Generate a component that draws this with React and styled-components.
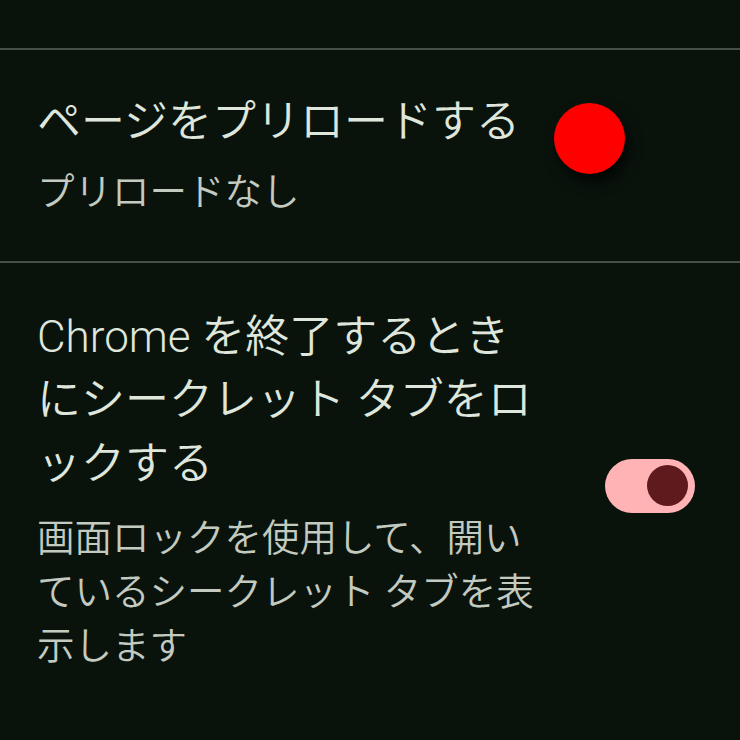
import React from "react";
import styled, { createGlobalStyle } from "styled-components";

const Global = createGlobalStyle`
  html, body {
    margin: 0;
    padding: 0;
    background: #09130c;
  }
  body {
    font-family: "Roboto", "Noto Sans CJK JP", sans-serif;
    -webkit-font-smoothing: antialiased;
  }
`;

const Screen = styled.div`
  width: 740px;
  height: 740px;
  overflow: hidden;
  background: #09130c;
  display: flex;
  flex-direction: column;
`;

const TopSpace = styled.div`
  height: 48px;
  flex: none;
`;

const Divider = styled.div`
  height: 2px;
  background: #465048;
  flex: none;
`;

const Row = styled.div`
  display: flex;
  align-items: ${(p) => (p.$top ? "flex-start" : "center")};
  padding: ${(p) => (p.$top ? "41px" : "43px")} 45px 42px 37px;
  flex: none;
`;

const TextCol = styled.div`
  width: 505px;
  flex: none;
  display: flex;
  flex-direction: column;
  gap: ${(p) => p.$gap}px;
`;

const Title = styled.div`
  font-size: 44px;
  line-height: 63.5px;
  color: #dfe6dc;
  font-weight: 350;
`;

const Subtitle = styled.div`
  font-size: 37.5px;
  line-height: 54px;
  color: #c3cac0;
  font-weight: 350;
`;

const Dot = styled.div`
  width: 71px;
  height: 71px;
  border-radius: 50%;
  background: #ff0000;
  margin-left: 12px;
  margin-top: 12px;
  flex: none;
  box-shadow: 4px 8px 14px rgba(0, 0, 0, 0.75);
`;

const Track = styled.div`
  margin-left: auto;
  margin-bottom: 7px;
  width: 90px;
  height: 54px;
  border-radius: 27px;
  background: #ffb3b4;
  display: flex;
  align-items: center;
  justify-content: flex-end;
  padding-right: 7px;
  box-sizing: border-box;
  flex: none;
`;

const Knob = styled.div`
  width: 41px;
  height: 41px;
  border-radius: 50%;
  background: #5e1a1d;
`;

export default function App() {
  return (
    <Screen>
      <Global />
      <TopSpace />
      <Divider />
      <Row $top>
        <TextCol $gap={10}>
          <Title>ページをプリロードする</Title>
          <Subtitle>プリロードなし</Subtitle>
        </TextCol>
        <Dot />
      </Row>
      <Divider />
      <Row>
        <TextCol $gap={15}>
          <Title>Chrome を終了するときにシークレット タブをロックする</Title>
          <Subtitle>画面ロックを使用して、開いているシークレット タブを表示します</Subtitle>
        </TextCol>
        <Track>
          <Knob />
        </Track>
      </Row>
    </Screen>
  );
}
